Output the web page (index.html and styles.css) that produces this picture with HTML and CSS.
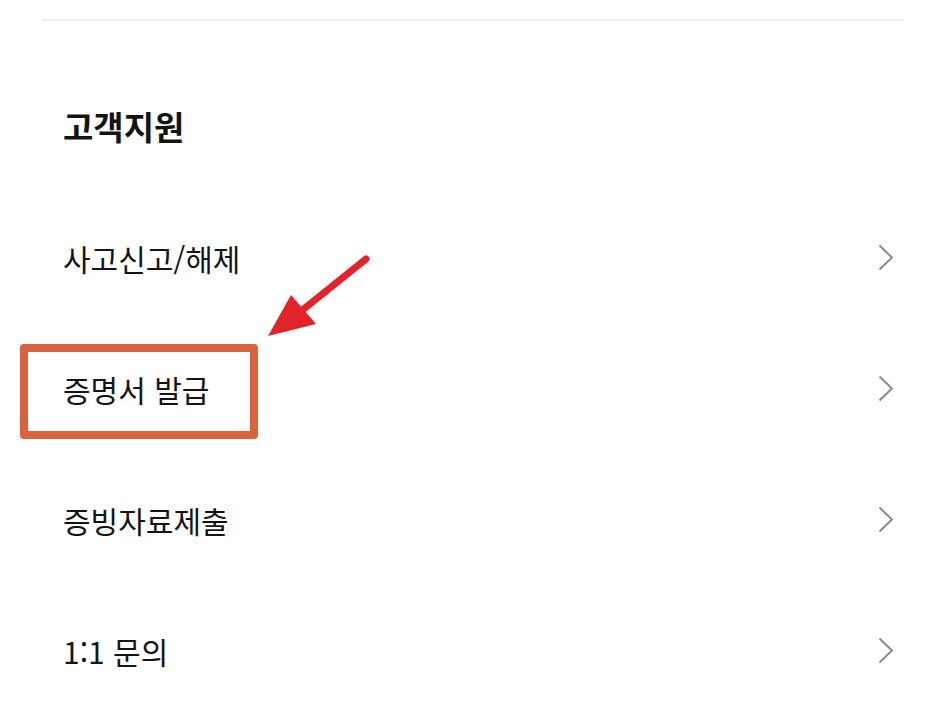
FILE: index.html
```html
<!DOCTYPE html>
<html lang="ko">
<head>
<meta charset="utf-8">
<title>고객지원</title>
<link rel="stylesheet" href="styles.css">
</head>
<body>
<div class="page">
  <div class="divider"></div>
  <section class="support">
    <h2 class="title">고객지원</h2>
    <ul class="menu">
      <li class="item"><span class="label">사고신고/해제</span><svg class="chev" viewBox="0 0 16 27"><path d="M1.5 1.5 L14 13.5 L1.5 25.5"/></svg></li>
      <li class="item highlighted"><span class="label">증명서 발급</span><svg class="chev" viewBox="0 0 16 27"><path d="M1.5 1.5 L14 13.5 L1.5 25.5"/></svg><span class="mark"></span></li>
      <li class="item"><span class="label">증빙자료제출</span><svg class="chev" viewBox="0 0 16 27"><path d="M1.5 1.5 L14 13.5 L1.5 25.5"/></svg></li>
      <li class="item"><span class="label">1:1 문의</span><svg class="chev" viewBox="0 0 16 27"><path d="M1.5 1.5 L14 13.5 L1.5 25.5"/></svg></li>
    </ul>
  </section>
  <svg class="arrow" viewBox="0 0 125 100"><line x1="111" y1="14" x2="45" y2="67"/><polygon points="13,91 36,50 61,79"/></svg>
</div>
</body>
</html>
```
FILE: styles.css
```css
html, body {
  margin: 0;
  padding: 0;
  background: #ffffff;
}
body {
  font-family: "Noto Sans CJK KR", "Noto Sans", sans-serif;
  color: #141414;
}
.page {
  position: relative;
  width: 941px;
  height: 725px;
  overflow: hidden;
  padding: 19px 37px 0 42px;
  box-sizing: border-box;
}
.divider {
  height: 2px;
  background: #eeeeee;
}
.support {
  padding: 40px 10px 0 21px;
}
.title {
  margin: 0;
  height: 131px;
  display: flex;
  align-items: center;
  font-size: 33px;
  font-weight: 700;
  line-height: 1;
}
.menu {
  list-style: none;
  margin: 0;
  padding: 0;
}
.item {
  position: relative;
  height: 131px;
  display: flex;
  align-items: center;
  justify-content: space-between;
}
.label {
  font-size: 30px;
  line-height: 1;
}
.chev {
  width: 16px;
  height: 27px;
  fill: none;
  stroke: #8a8a8a;
  stroke-width: 2;
}
.mark {
  position: absolute;
  left: -43px;
  top: 21px;
  width: 222px;
  height: 79px;
  border: 8px solid #d9633f;
  border-radius: 4px;
}
.arrow {
  position: absolute;
  left: 255px;
  top: 245px;
  width: 125px;
  height: 100px;
}
.arrow line {
  stroke: #e3232a;
  stroke-width: 7;
  stroke-linecap: round;
}
.arrow polygon {
  fill: #e3232a;
}
```
